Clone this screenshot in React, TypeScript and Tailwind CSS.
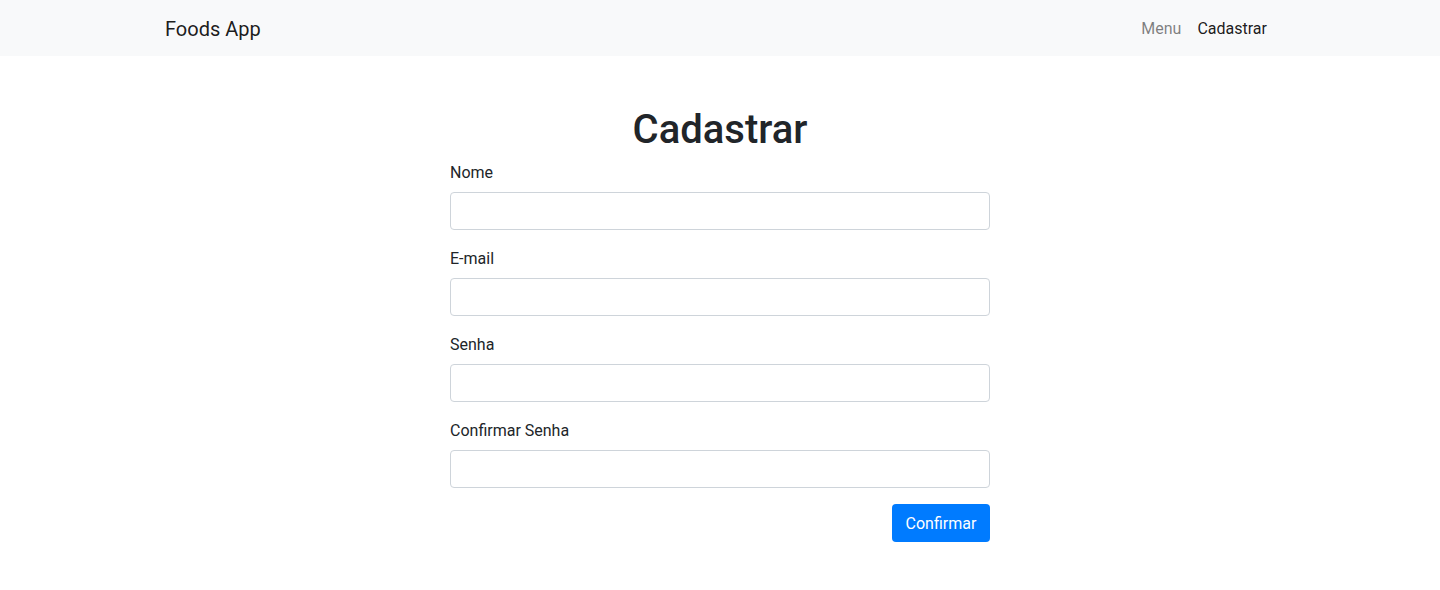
export default function App() {
  const fields = ["Nome", "E-mail", "Senha", "Confirmar Senha"];
  return (
    <div className="min-h-[590px] bg-white text-[#212529]" style={{ fontFamily: "Roboto, 'Noto Sans', sans-serif" }}>
      <nav className="h-[56px] bg-[#f8f9fa] px-4 py-2">
        <div className="mx-auto flex h-full w-[1140px] items-center justify-between px-[15px] pt-px">
          <a className="text-[20px] leading-[30px] text-black/90">Foods App</a>
          <div className="flex text-[16px] leading-[24px]">
            <a className="px-2 text-black/50">Menu</a>
            <a className="px-2 text-black/90">Cadastrar</a>
          </div>
        </div>
      </nav>
      <div className="mx-auto mt-[50px] w-[540px]">
        <h1 className="mb-[6px] text-center text-[40px] font-medium leading-[48px]">Cadastrar</h1>
        <form>
          {fields.map((f) => (
            <div key={f} className="mb-4">
              <label className="mb-[7px] block pt-px text-[16px] leading-[24px]">{f}</label>
              <input
                type={f.includes("Senha") ? "password" : "text"}
                className="block h-[38px] w-full rounded-[4px] border border-[#ced4da] bg-white px-3 text-[16px] outline-none"
              />
            </div>
          ))}
          <div className="flex justify-end">
            <button type="button" className="h-[38px] w-[98px] rounded-[4px] bg-[#007bff] pt-px text-center text-[16px] leading-[24px] text-white">
              Confirmar
            </button>
          </div>
        </form>
      </div>
    </div>
  );
}
